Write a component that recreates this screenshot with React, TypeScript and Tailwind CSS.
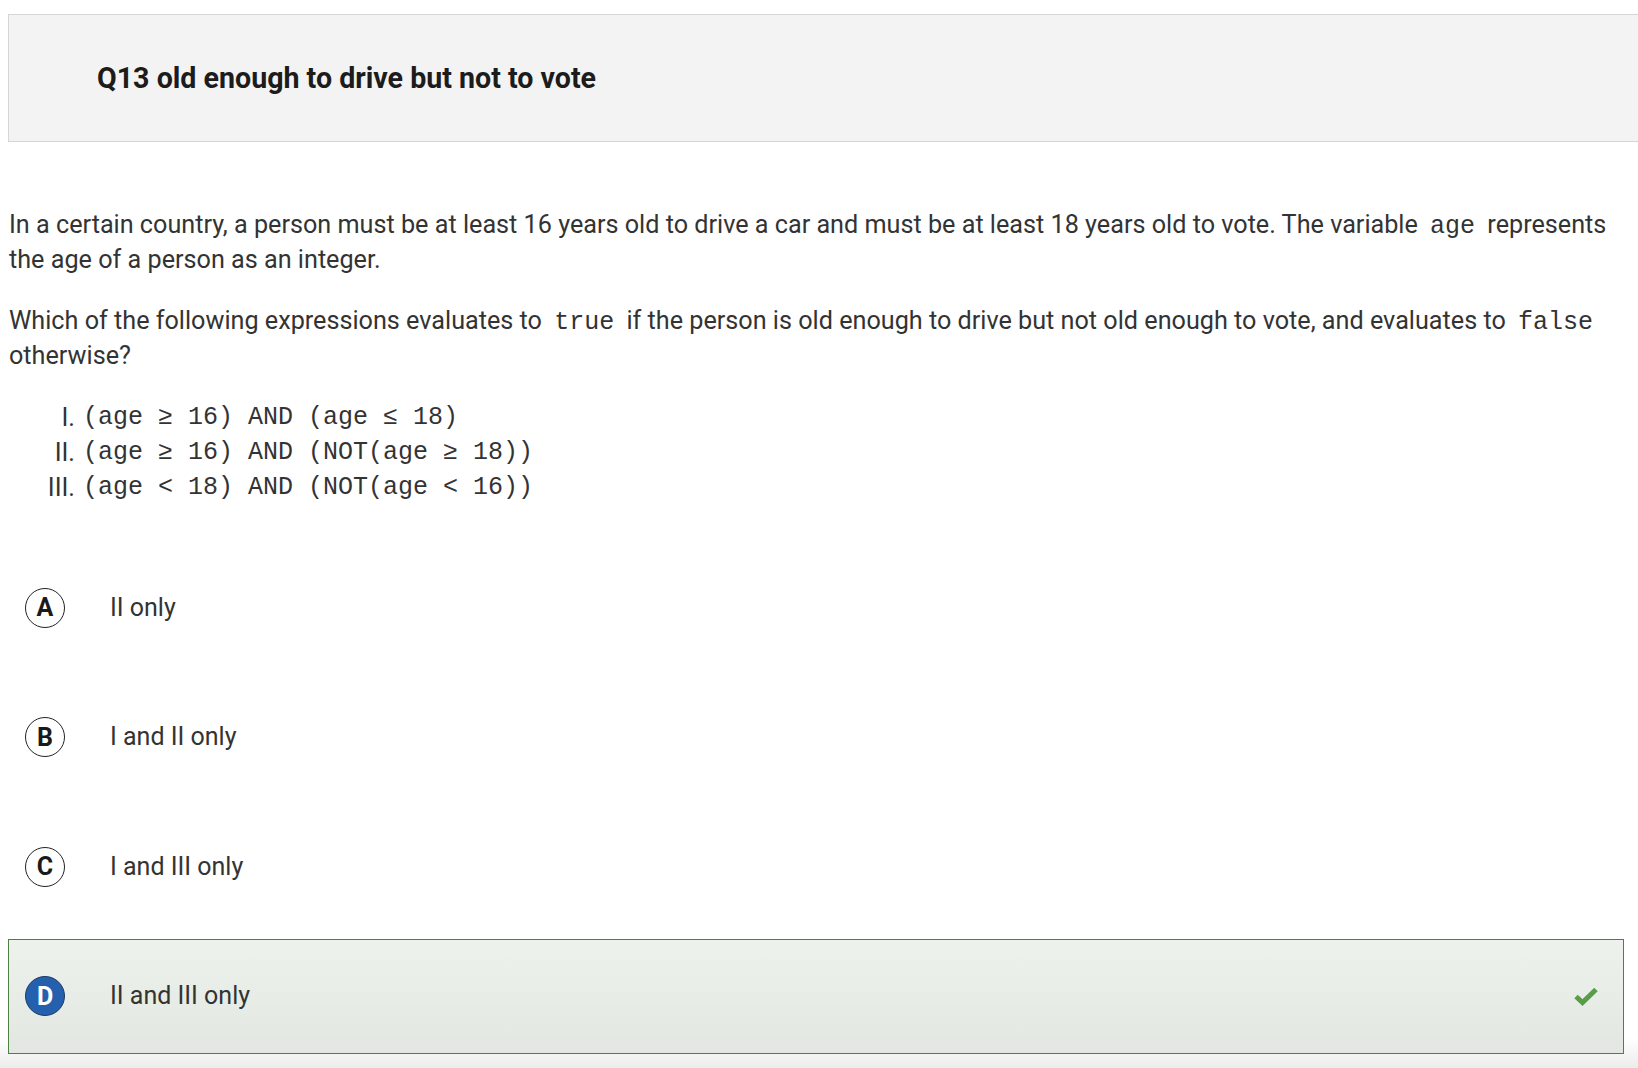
const OPTIONS = [
  { key: "A", label: "II only" },
  { key: "B", label: "I and II only" },
  { key: "C", label: "I and III only" },
  { key: "D", label: "II and III only", correct: true },
];

const STATEMENTS = [
  { num: "I.", code: "(age ≥ 16) AND (age ≤ 18)" },
  { num: "II.", code: "(age ≥ 16) AND (NOT(age ≥ 18))" },
  { num: "III.", code: "(age < 18) AND (NOT(age < 16))" },
];

function Code({ children }: { children: React.ReactNode }) {
  return (
    <code className="px-[6px] font-['Liberation_Mono',monospace] text-[25px] leading-none text-[#333]">{children}</code>
  );
}

function CheckMark() {
  return (
    <svg width="26" height="20" viewBox="0 0 26 20" className="text-[#5a9d48]">
      <path d="M3 10.5 L9.5 16.5 L23 3.5" fill="none" stroke="currentColor" strokeWidth="5" strokeLinejoin="miter" />
    </svg>
  );
}

function OptionRow({ letter, label, correct }: { letter: string; label: string; correct?: boolean }) {
  return (
    <div
      className={`flex h-[115px] items-center pl-[16px] pr-[24px] border ${
        correct
          ? "border-[#4e7f43] bg-[linear-gradient(to_bottom,#edf3ec,#e2e8e1)]"
          : "border-transparent"
      }`}
    >
      <div
        className={`flex h-10 w-10 shrink-0 items-center justify-center rounded-full border text-[25px] font-bold leading-none ${
          correct ? "border-[#1d3a63] bg-[#2460ae] text-white" : "border-[#222] bg-white text-[#1a1a1a]"
        }`}
      >
        {letter}
      </div>
      <div className="ml-[45px] flex-1 text-[25px] text-[#333]">{label}</div>
      {correct && <CheckMark />}
    </div>
  );
}

export default function App() {
  return (
    <div className="min-h-screen bg-[linear-gradient(to_bottom,#ffffff_calc(100%-30px),#ececec)] font-['Roboto',sans-serif] text-[#333]">
      <div className="pt-[14px] pl-[8px]">
        {/* Title bar */}
        <div className="flex h-[128px] items-center border border-r-0 border-[#d6d6d6] bg-[#f3f3f3] pl-[88px]">
          <h1 className="text-[28.6px] font-bold text-[#1c1c1c]">Q13 old enough to drive but not to vote</h1>
        </div>
      </div>

      <div className="w-[1624px] pl-[9px]">
        <div className="mt-[66px] space-y-[27px] text-[25.2px] leading-[34.5px]">
          <p>
            In a certain country, a person must be at least 16 years old to drive a car and must be at least 18 years
            old to vote. The variable <Code>age</Code> represents the age of a person as an integer.
          </p>
          <p>
            Which of the following expressions evaluates to <Code>true</Code> if the person is old enough to drive but
            not old enough to vote, and evaluates to <Code>false</Code> otherwise?
          </p>

          {/* Statements */}
          <div>
            {STATEMENTS.map((s) => (
              <div key={s.num} className="flex h-[35px] items-center">
                <span className="w-[66px] text-right leading-none">{s.num}</span>
                <span className="ml-[8px] whitespace-pre font-['Liberation_Mono',monospace] text-[25px] leading-none">
                  {s.code}
                </span>
              </div>
            ))}
          </div>
        </div>
      </div>

      {/* Answer options */}
      <div className="mt-[45px] ml-[8px] w-[1616px] space-y-[14.5px]">
        {OPTIONS.map((o) => (
          <OptionRow key={o.key} letter={o.key} label={o.label} correct={o.correct} />
        ))}
      </div>
    </div>
  );
}
